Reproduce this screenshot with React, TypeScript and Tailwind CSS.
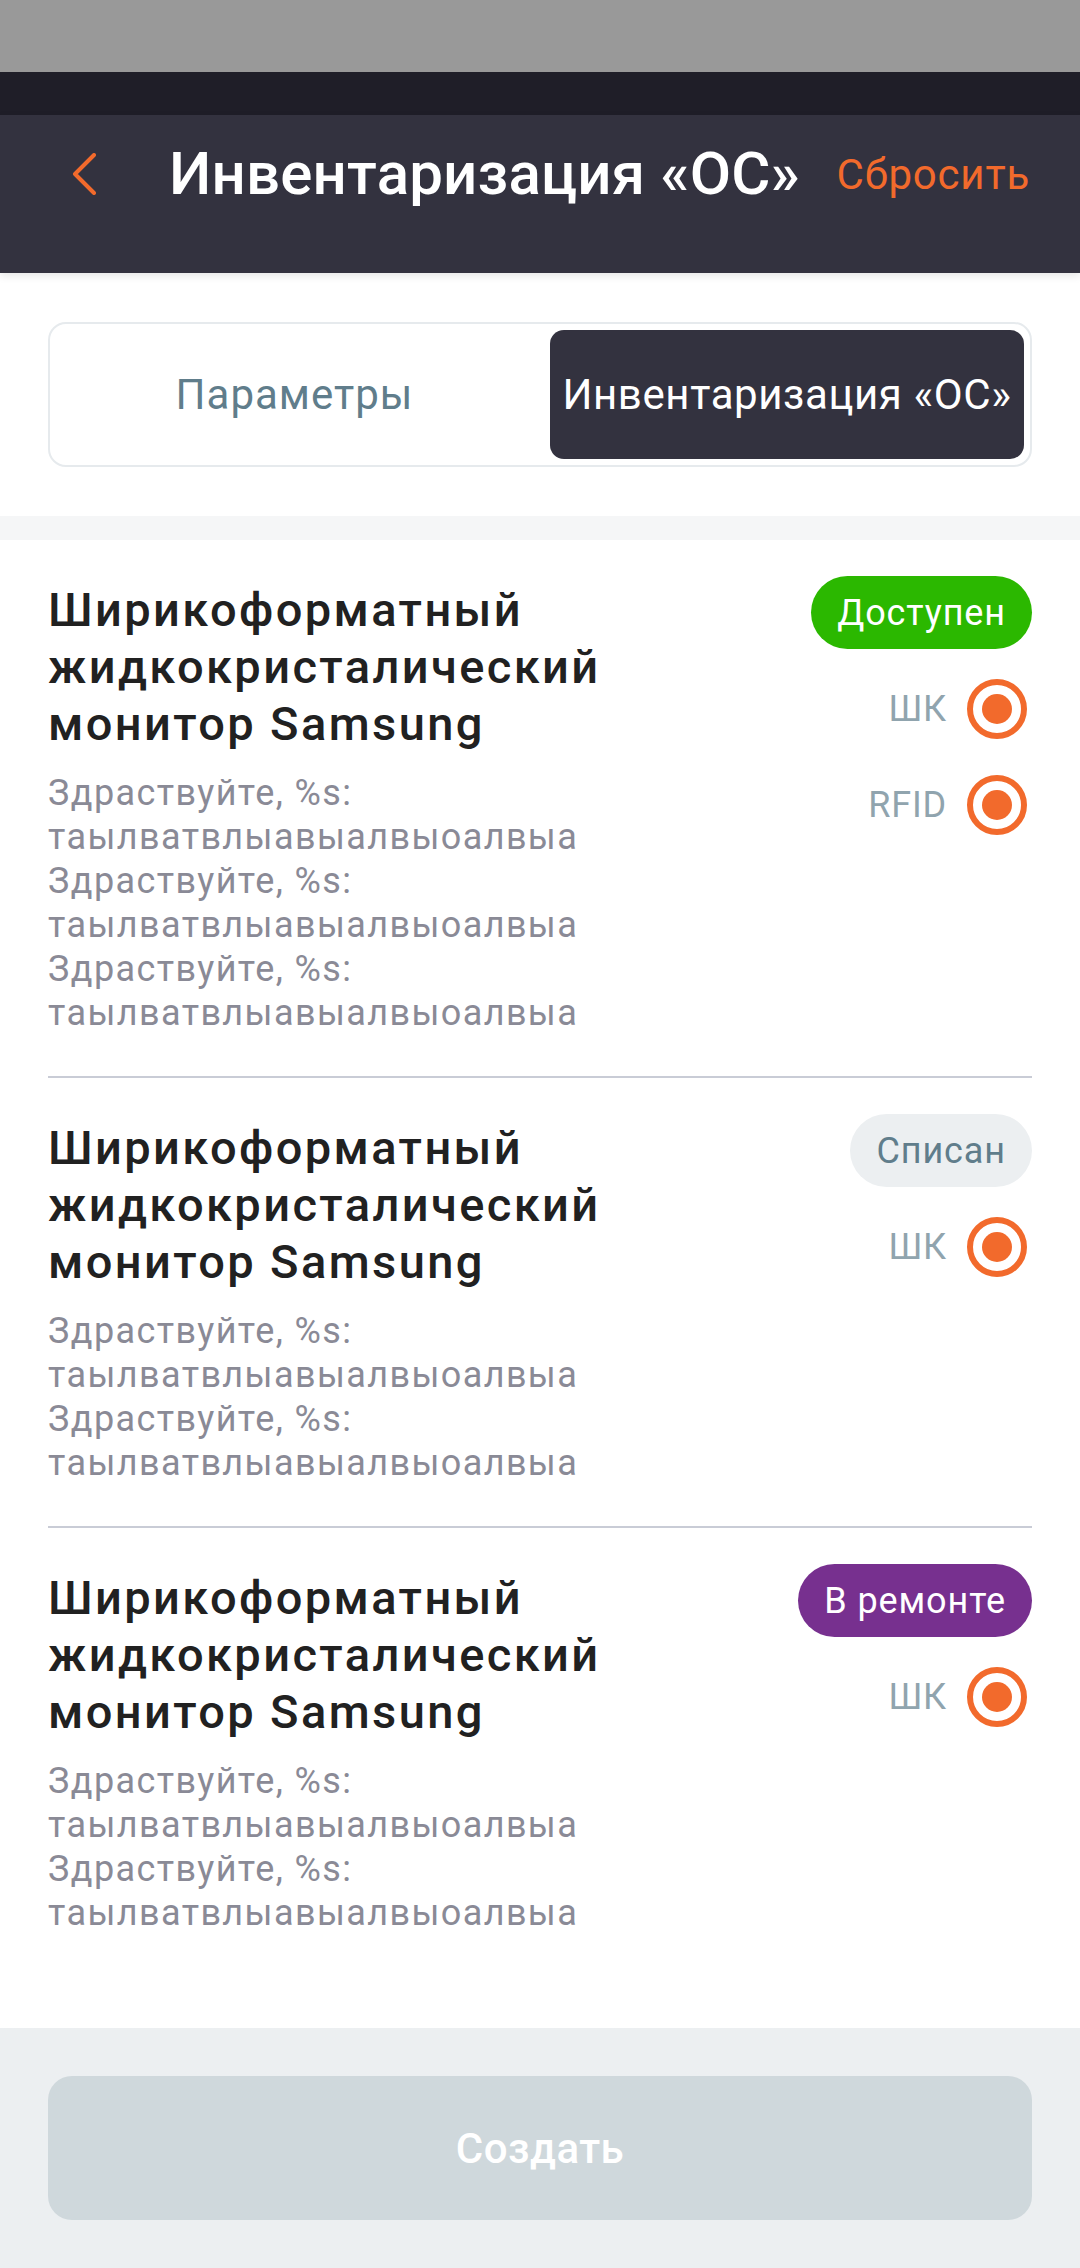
import React from "react";

const ORANGE = "#f26a2c";

function Radio() {
  return (
    <div className="w-[60px] h-[60px] rounded-full border-[6px] border-[#f26a2c] flex items-center justify-center mr-[5px]">
      <div className="w-[30px] h-[30px] rounded-full bg-[#f26a2c]" />
    </div>
  );
}

type Item = {
  badge: string;
  badgeCls: string;
  radios: string[];
  paras: number;
  last?: boolean;
};

const items: Item[] = [
  { badge: "Доступен", badgeCls: "bg-[#2bb800] text-white", radios: ["ШК", "RFID"], paras: 3 },
  { badge: "Списан", badgeCls: "bg-[#eceff1] text-[#607d8b]", radios: ["ШК"], paras: 2 },
  { badge: "В ремонте", badgeCls: "bg-[#77308f] text-white", radios: ["ШК"], paras: 2, last: true },
];

function Row({ item }: { item: Item }) {
  return (
    <div
      className={
        "flex items-start justify-between pt-[36px] " +
        (item.last ? "pb-[41px]" : "pb-[41px] border-b-2 border-[#c9ccd6]")
      }
    >
      <div className="flex-1 min-w-0 pr-[24px]">
        <div className="mt-[5px] max-w-[660px] text-[47px] leading-[57px] font-medium text-[#212121] tracking-[2.4px]">
          Ширикоформатный жидкокристалический монитор Samsung
        </div>
        <div className="mt-[19px] text-[36px] leading-[44px] text-[#8a8a96] tracking-[1.4px]">
          {Array.from({ length: item.paras }).map((_, i) => (
            <div key={i}>Здраствуйте, %s: таылватвлыавыалвыоалвыа</div>
          ))}
        </div>
      </div>
      <div className="flex flex-col items-end shrink-0">
        <div
          className={
            "h-[73px] px-[26px] rounded-full flex items-center text-[36px] tracking-[0.9px] " +
            item.badgeCls
          }
        >
          {item.badge}
        </div>
        <div className="mt-[30px] flex flex-col items-end gap-[36px]">
          {item.radios.map((r) => (
            <div key={r} className="flex items-center gap-[20px]">
              <span className="text-[36px] text-[#90a4ae] tracking-[0.8px]">{r}</span>
              <Radio />
            </div>
          ))}
        </div>
      </div>
    </div>
  );
}

export default function App() {
  return (
    <div className="w-[1080px] h-[2268px] flex flex-col bg-white font-['Roboto',sans-serif] overflow-hidden">
      <div className="h-[72px] bg-[#999999] shrink-0" />
      <div className="h-[43px] bg-[#1f1e28] shrink-0" />
      <header className="relative z-10 h-[158px] bg-[#33323f] shrink-0 shadow-[0_3px_8px_rgba(0,0,0,0.10)]">
        <div className="h-[118px] flex items-center pl-[72px] pr-[50px]">
          <svg width="24" height="42" viewBox="0 0 24 42" fill="none" className="shrink-0">
            <path d="M22 2 L3 21 L22 40" stroke={ORANGE} strokeWidth="4" strokeLinecap="round" strokeLinejoin="round" />
          </svg>
          <div className="ml-[73px] flex-1 text-[60px] font-medium text-white whitespace-nowrap tracking-[0.2px]">
            Инвентаризация «ОС»
          </div>
          <div className="text-[42px] text-[#f26a2c] tracking-[0.8px]">Сбросить</div>
        </div>
      </header>
      <div className="shrink-0 px-[48px] py-[49px] bg-white">
        <div className="h-[145px] border-2 border-[#e6eaed] rounded-[18px] p-[6px] flex">
          <div className="flex-1 flex items-center justify-center pr-[17px] text-[42px] text-[#607d8b] tracking-[1px]">
            Параметры
          </div>
          <div className="w-[474px] rounded-[14px] bg-[#33323f] flex items-center justify-center text-[42px] text-white whitespace-nowrap tracking-[0.6px]">
            Инвентаризация «ОС»
          </div>
        </div>
      </div>
      <div className="h-[24px] bg-[#f5f6f7] shrink-0" />
      <div className="flex-1 bg-white px-[48px]">
        {items.map((it, i) => (
          <Row key={i} item={it} />
        ))}
      </div>
      <div className="shrink-0 bg-[#eceff1] p-[48px]">
        <div className="h-[144px] rounded-[24px] bg-[#cfd8dc] flex items-center justify-center text-[42px] font-medium text-white tracking-[0.5px]">
          Создать
        </div>
      </div>
    </div>
  );
}
